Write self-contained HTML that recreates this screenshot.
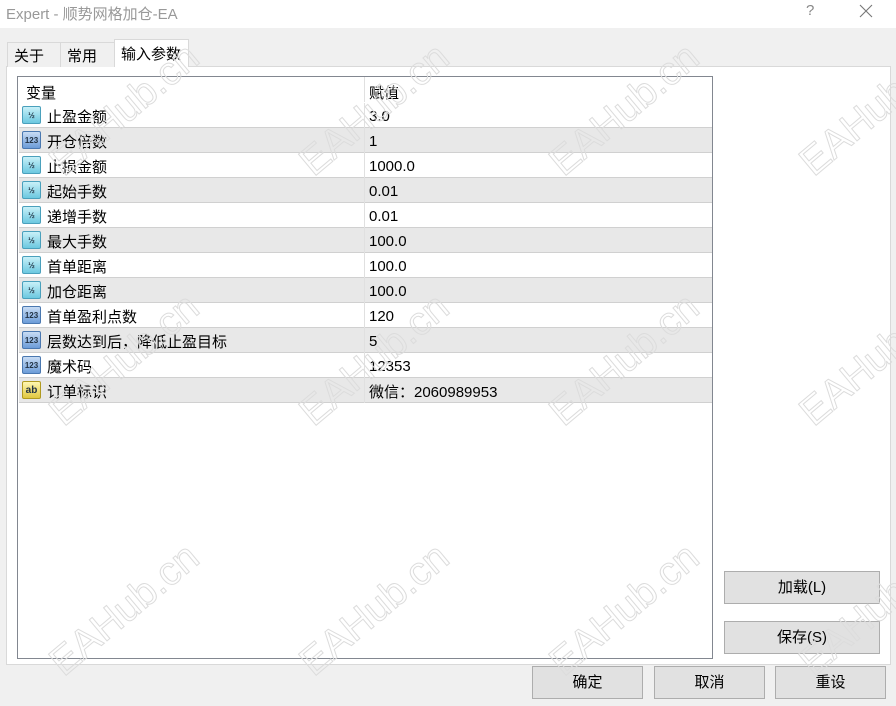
<!DOCTYPE html>
<html><head><meta charset="utf-8"><style>
*{margin:0;padding:0;box-sizing:border-box}
body{width:896px;height:706px;background:#f0f0f0;font-family:"Liberation Sans","Noto Sans CJK SC",sans-serif;font-size:15px;color:#000;position:relative;overflow:hidden}
.abs{position:absolute}
.title{left:0;top:0;width:896px;height:28px;background:#fff}
.tab{top:42px;height:25px;border:1px solid #d9d9d9;border-bottom:none;background:#f0f0f0;padding:2px 0 0 6px}
.panel{left:6px;top:66px;width:885px;height:599px;background:#fff;border:1px solid #d9d9d9}
.box{left:17px;top:76px;width:696px;height:583px;border:1px solid #828790;background:#fff}
.row{position:absolute;left:1px;width:693px;height:25px;border-bottom:1px solid #d0d0d0}
.row.g{background:#e8e8e8}
.row span{position:absolute;top:3px}
.row .n{left:28px}.row .v{left:350px;top:5px}
.row .sep{position:absolute;left:345px;top:0;width:1px;height:25px;background:#e0e0e0}
.ic{position:absolute;left:3px;top:3px;width:19px;height:18px;border-radius:2px;font:bold 8px "Liberation Sans",sans-serif;text-align:center;line-height:17px;color:#234}
.ic.h{background:linear-gradient(#c8f0f8,#6cc8e0);border:1px solid #4aa0bc}
.ic.n3{background:linear-gradient(#c8dcf4,#6c9cd8);border:1px solid #4a78b0}
.ic.ab{background:linear-gradient(#fff6b0,#e0c840);border:1px solid #b09a20;font-size:10px}
.btn{height:33px;background:#e1e1e1;border:1px solid #adadad;text-align:center;line-height:31px}
.wm{font:40px "Liberation Sans",sans-serif;color:transparent;-webkit-text-stroke:1px #dcdcdc;transform:rotate(-40deg);transform-origin:left bottom;white-space:nowrap}
</style></head><body>
<div class="abs title"></div>
<div class="abs" style="left:6px;top:3px;font-size:15px;color:#999">Expert - 顺势网格加仓-EA</div>
<div class="abs" style="left:806px;top:2px;font-size:15px;color:#888">?</div>
<svg class="abs" style="left:859px;top:4px" width="14" height="14"><path d="M1 1L13 13M13 1L1 13" stroke="#777" stroke-width="1.1"/></svg>
<div class="abs panel"></div>
<div class="abs tab" style="left:7px;width:54px">关于</div>
<div class="abs tab" style="left:60px;width:55px">常用</div>
<div class="abs tab" style="left:114px;top:39px;height:28px;width:75px;background:#fff;padding-top:3px">输入参数</div>
<div class="abs box">
<div class="row" style="top:0;border-bottom:none"><span style="left:7px;top:5px">变量</span><span class="v" style="top:5px">赋值</span><div class="sep"></div></div>
<div class="row" style="top:26px"><div class="ic h">½</div><span class="n">止盈金额</span><div class="sep"></div><span class="v">3.0</span></div>
<div class="row g" style="top:51px"><div class="ic n3">123</div><span class="n">开仓倍数</span><div class="sep"></div><span class="v">1</span></div>
<div class="row" style="top:76px"><div class="ic h">½</div><span class="n">止损金额</span><div class="sep"></div><span class="v">1000.0</span></div>
<div class="row g" style="top:101px"><div class="ic h">½</div><span class="n">起始手数</span><div class="sep"></div><span class="v">0.01</span></div>
<div class="row" style="top:126px"><div class="ic h">½</div><span class="n">递增手数</span><div class="sep"></div><span class="v">0.01</span></div>
<div class="row g" style="top:151px"><div class="ic h">½</div><span class="n">最大手数</span><div class="sep"></div><span class="v">100.0</span></div>
<div class="row" style="top:176px"><div class="ic h">½</div><span class="n">首单距离</span><div class="sep"></div><span class="v">100.0</span></div>
<div class="row g" style="top:201px"><div class="ic h">½</div><span class="n">加仓距离</span><div class="sep"></div><span class="v">100.0</span></div>
<div class="row" style="top:226px"><div class="ic n3">123</div><span class="n">首单盈利点数</span><div class="sep"></div><span class="v">120</span></div>
<div class="row g" style="top:251px"><div class="ic n3">123</div><span class="n">层数达到后，降低止盈目标</span><div class="sep"></div><span class="v">5</span></div>
<div class="row" style="top:276px"><div class="ic n3">123</div><span class="n">魔术码</span><div class="sep"></div><span class="v">12353</span></div>
<div class="row g" style="top:301px"><div class="ic ab">ab</div><span class="n">订单标识</span><div class="sep"></div><span class="v" style="top:3px">微信：2060989953</span></div>
</div>
<div class="abs btn" style="left:724px;top:571px;width:156px">加载(L)</div>
<div class="abs btn" style="left:724px;top:621px;width:156px">保存(S)</div>
<div class="abs btn" style="left:532px;top:666px;width:111px">确定</div>
<div class="abs btn" style="left:654px;top:666px;width:111px">取消</div>
<div class="abs btn" style="left:775px;top:666px;width:111px">重设</div>
<div class="abs wm" style="left:70px;top:140px">EAHub.cn</div>
<div class="abs wm" style="left:320px;top:140px">EAHub.cn</div>
<div class="abs wm" style="left:570px;top:140px">EAHub.cn</div>
<div class="abs wm" style="left:820px;top:140px">EAHub.cn</div>
<div class="abs wm" style="left:70px;top:390px">EAHub.cn</div>
<div class="abs wm" style="left:320px;top:390px">EAHub.cn</div>
<div class="abs wm" style="left:570px;top:390px">EAHub.cn</div>
<div class="abs wm" style="left:820px;top:390px">EAHub.cn</div>
<div class="abs wm" style="left:70px;top:640px">EAHub.cn</div>
<div class="abs wm" style="left:320px;top:640px">EAHub.cn</div>
<div class="abs wm" style="left:570px;top:640px">EAHub.cn</div>
<div class="abs wm" style="left:820px;top:640px">EAHub.cn</div>
</body></html>
